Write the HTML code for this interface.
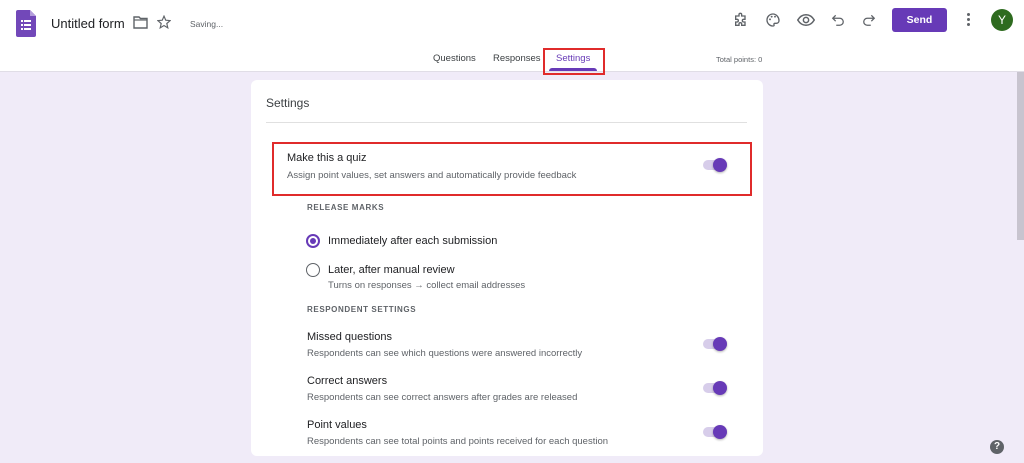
<!DOCTYPE html>
<html><head><style>
*{margin:0;padding:0;box-sizing:border-box}
body{width:1024px;height:463px;overflow:hidden;background:#f0ebf8;font-family:"Liberation Sans",Arial,sans-serif;position:relative;color:#202124}
.a{position:absolute}
.hdr{left:0;top:0;width:1024px;height:72px;background:#fff;border-bottom:1px solid #e0dde6}
.t{font-size:11px;color:#202124;white-space:nowrap}
.s{font-size:9.5px;color:#5f6368;white-space:nowrap}
.cap{font-size:8px;letter-spacing:.6px;color:#5f6368;font-weight:bold}
.tg{width:24px;height:10px;border-radius:5px;background:#d7cdea}
.kn{width:14px;height:14px;border-radius:50%;background:#673ab7;box-shadow:0 1px 2px rgba(0,0,0,.3)}
</style></head><body>
<div class="a hdr"></div>
<svg class="a" style="left:16px;top:10px" width="20" height="27" viewBox="0 0 20 27"><path d="M2 0h12l6 6v19a2 2 0 0 1-2 2H2a2 2 0 0 1-2-2V2a2 2 0 0 1 2-2z" fill="#7248b9"/><path d="M14 0v6h6z" fill="#b39ddb"/><g fill="#fff"><rect x="5" y="10" width="2" height="2"/><rect x="8" y="10" width="7" height="2"/><rect x="5" y="14" width="2" height="2"/><rect x="8" y="14" width="7" height="2"/><rect x="5" y="18" width="2" height="2"/><rect x="8" y="18" width="7" height="2"/></g></svg>
<div class="a" style="left:51px;top:16px;font-size:13px;color:#202124;white-space:nowrap">Untitled form</div>
<svg class="a" style="left:133px;top:16px" width="15" height="13" viewBox="0 0 15 13"><path d="M1 1h5l1.5 1.5H14v9.5H1z" fill="none" stroke="#5f6368" stroke-width="1.4"/><path d="M1 4h13" stroke="#5f6368" stroke-width="1.2"/></svg>
<svg class="a" style="left:157px;top:15px" width="14" height="14" viewBox="0 0 24 24"><path d="M12 2l3 7 7.5.6-5.7 5 1.7 7.4L12 18l-6.5 4 1.7-7.4-5.7-5L9 9z" fill="none" stroke="#5f6368" stroke-width="2"/></svg>
<div class="a" style="left:190px;top:19px;font-size:8.5px;color:#5f6368">Saving...</div>
<svg class="a" style="left:733px;top:12px" width="16" height="16" viewBox="0 0 24 24"><path d="M4 6h5V4a2 2 0 0 1 4 0v2h5v5h-2a2 2 0 0 0 0 4h2v5h-5v-2a2 2 0 0 0-4 0v2H4v-5h2a2 2 0 0 0 0-4H4z" fill="none" stroke="#5f6368" stroke-width="2"/></svg>
<svg class="a" style="left:765px;top:12px" width="16" height="16" viewBox="0 0 24 24"><path d="M12 3a9 9 0 0 0 0 18c1.5 0 2-1 1.5-2s0-2 1.5-2h2a4 4 0 0 0 4-4c0-5-4-10-9-10z" fill="none" stroke="#5f6368" stroke-width="2"/><circle cx="7.5" cy="11" r="1.4" fill="#5f6368"/><circle cx="10" cy="7" r="1.4" fill="#5f6368"/><circle cx="15" cy="7" r="1.4" fill="#5f6368"/></svg>
<svg class="a" style="left:797px;top:13px" width="18" height="14" viewBox="0 0 24 18"><path d="M1 9c3-5 7-7 11-7s8 2 11 7c-3 5-7 7-11 7S4 14 1 9z" fill="none" stroke="#5f6368" stroke-width="2"/><circle cx="12" cy="9" r="3.5" fill="none" stroke="#5f6368" stroke-width="2"/></svg>
<svg class="a" style="left:831px;top:13px" width="14" height="14" viewBox="0 0 24 24"><path d="M8 4L3 9l5 5M3 9h12a6 6 0 0 1 0 12H9" fill="none" stroke="#5f6368" stroke-width="2.2"/></svg>
<svg class="a" style="left:862px;top:13px" width="14" height="14" viewBox="0 0 24 24"><path d="M16 4l5 5-5 5M21 9H9a6 6 0 0 0 0 12h6" fill="none" stroke="#5f6368" stroke-width="2.2"/></svg>
<div class="a" style="left:892px;top:8px;width:55px;height:24px;background:#673ab7;border-radius:3px;color:#fff;font-size:10.5px;font-weight:bold;text-align:center;line-height:24px">Send</div>
<div class="a" style="left:967px;top:13px;width:3px;height:3px;border-radius:50%;background:#5f6368;box-shadow:0 5px 0 #5f6368,0 10px 0 #5f6368"></div>
<div class="a" style="left:991px;top:9px;width:22px;height:22px;border-radius:50%;background:#2e6b1f;color:#fff;font-size:12px;text-align:center;line-height:22px">Y</div>
<div class="a" style="left:433px;top:53px;font-size:9.5px;color:#3c4043">Questions</div>
<div class="a" style="left:493px;top:53px;font-size:9.5px;color:#3c4043">Responses</div>
<div class="a" style="left:556px;top:53px;font-size:9.5px;color:#673ab7">Settings</div>
<div class="a" style="left:549px;top:68px;width:48px;height:3px;background:#673ab7;border-radius:3px 3px 0 0"></div>
<div class="a" style="left:543px;top:48px;width:62px;height:27px;border:2px solid #e02b2b"></div>
<div class="a" style="left:716px;top:55px;font-size:7.5px;color:#5f6368">Total points: 0</div>
<div class="a" style="left:1017px;top:72px;width:7px;height:168px;background:#c8c4cf"></div>
<div class="a" style="left:251px;top:80px;width:512px;height:376px;background:#fff;border-radius:6px"></div>
<div class="a" style="left:266px;top:96px;font-size:12px;color:#3c4043">Settings</div>
<div class="a" style="left:266px;top:122px;width:481px;height:1px;background:#e0e0e0"></div>
<div class="a" style="left:272px;top:142px;width:480px;height:54px;border:2px solid #e02b2b"></div>
<div class="a t" style="left:287px;top:152px">Make this a quiz</div>
<div class="a s" style="left:287px;top:170px">Assign point values, set answers and automatically provide feedback</div>
<div class="a tg" style="left:703px;top:160px"></div><div class="a kn" style="left:713px;top:158px"></div>
<div class="a cap" style="left:307px;top:203px">RELEASE MARKS</div>
<div class="a" style="left:306px;top:234px;width:14px;height:14px;border-radius:50%;border:2px solid #673ab7"></div>
<div class="a" style="left:310px;top:238px;width:6px;height:6px;border-radius:50%;background:#673ab7"></div>
<div class="a t" style="left:328px;top:235px">Immediately after each submission</div>
<div class="a" style="left:306px;top:263px;width:14px;height:14px;border-radius:50%;border:1.5px solid #5f6368"></div>
<div class="a t" style="left:328px;top:264px">Later, after manual review</div>
<div class="a s" style="left:328px;top:280px">Turns on responses → collect email addresses</div>
<div class="a cap" style="left:307px;top:305px">RESPONDENT SETTINGS</div>
<div class="a t" style="left:307px;top:331px">Missed questions</div>
<div class="a s" style="left:307px;top:348px">Respondents can see which questions were answered incorrectly</div>
<div class="a tg" style="left:703px;top:339px"></div><div class="a kn" style="left:713px;top:337px"></div>
<div class="a t" style="left:307px;top:375px">Correct answers</div>
<div class="a s" style="left:307px;top:392px">Respondents can see correct answers after grades are released</div>
<div class="a tg" style="left:703px;top:383px"></div><div class="a kn" style="left:713px;top:381px"></div>
<div class="a t" style="left:307px;top:419px">Point values</div>
<div class="a s" style="left:307px;top:436px">Respondents can see total points and points received for each question</div>
<div class="a tg" style="left:703px;top:427px"></div><div class="a kn" style="left:713px;top:425px"></div>
<div class="a" style="left:990px;top:440px;width:14px;height:14px;border-radius:50%;background:#5f6368;color:#fff;font-size:10px;font-weight:bold;text-align:center;line-height:14px">?</div>
</body></html>
